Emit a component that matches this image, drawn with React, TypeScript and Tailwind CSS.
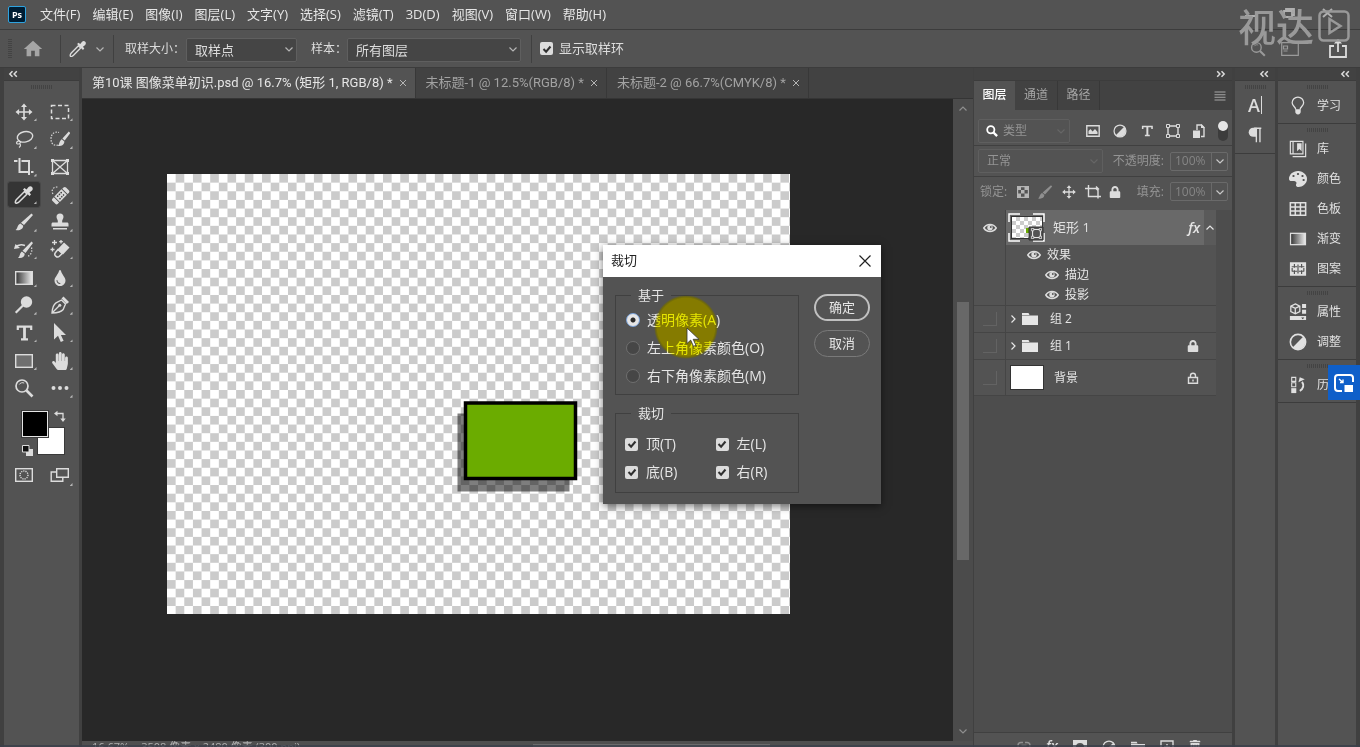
import { useState, type ReactNode } from "react";
import { MdHome } from "react-icons/md";
import { FaHandPaper, FaLock, FaPalette, FaTint, FaTrashAlt } from "react-icons/fa";

const menus = ["文件(F)", "编辑(E)", "图像(I)", "图层(L)", "文字(Y)", "选择(S)", "滤镜(T)", "3D(D)", "视图(V)", "窗口(W)", "帮助(H)"];

const docs = [
  "第10课 图像菜单初识.psd @ 16.7% (矩形 1, RGB/8) *",
  "未标题-1 @ 12.5%(RGB/8) *",
  "未标题-2 @ 66.7%(CMYK/8) *",
];

function Svg({ children, className = "size-5", box = "0 0 20 20" }: { children: ReactNode; className?: string; box?: string }) {
  return (
    <svg viewBox={box} className={`shrink-0 ${className}`} fill="none" stroke="currentColor" strokeWidth="1.4" aria-hidden="true">
      {children}
    </svg>
  );
}

const solid = { fill: "currentColor", stroke: "none" };

function Chevron({ className = "" }: { className?: string }) {
  return (
    <Svg box="0 0 10 10" className={`size-2.5 ${className}`}>
      <path d="M1.5 3.5 5 7l3.5-3.5" strokeWidth="1.2" />
    </Svg>
  );
}

function Double({ right = false }: { right?: boolean }) {
  return (
    <Svg box="0 0 10 8" className={`h-2 w-2.5 text-[#dcdcdc] ${right ? "rotate-180" : ""}`}>
      <path d="M4.5 1.2 1.8 4l2.7 2.8M8.8 1.2 6.1 4l2.7 2.8" strokeWidth="1.5" />
    </Svg>
  );
}

function Grip() {
  return <div className="mx-auto h-1 w-[21px] bg-[repeating-linear-gradient(90deg,#434343_0_1px,transparent_1px_2px)]" />;
}

function Eye() {
  return (
    <Svg box="0 0 14 10" className="h-2.5 w-3.5 text-[#dcdcdc]">
      <path d="M.8 5C3.6.4 10.4.4 13.2 5 10.4 9.6 3.6 9.6.8 5Z" strokeWidth="1.5" />
      <circle cx="7" cy="4.8" r="2.7" {...solid} />
      <circle cx="7.8" cy="4" r=".9" fill="#535353" stroke="none" />
    </Svg>
  );
}

function Folder({ className = "h-3.5 w-4" }: { className?: string }) {
  return (
    <Svg box="0 0 16 14" className={className}>
      <path d="M0 1h6.5l1 2H0zM0 3.6h16V13H0z" {...solid} />
    </Svg>
  );
}

function HalfCircle({ className = "size-4" }: { className?: string }) {
  return (
    <Svg box="0 0 16 16" className={className}>
      <circle cx="8" cy="8" r="6.8" />
      <path d="M12.8 3.2a6.8 6.8 0 0 1-9.6 9.6z" {...solid} />
    </Svg>
  );
}

function Shape({ className = "size-3.5" }: { className?: string }) {
  return (
    <Svg box="0 0 14 14" className={className}>
      <path d="M3 2h8M3 12h8M2 3v8M12 3v8" strokeWidth="1.4" />
      <path d="M.5.5h3v3h-3zM10.5.5h3v3h-3zM.5 10.5h3v3h-3zM10.5 10.5h3v3h-3z" strokeWidth="1" fill="#535353" />
    </Svg>
  );
}

function Serif({ className = "size-5" }: { className?: string }) {
  return (
    <Svg className={className}>
      <path d="M3.8 7V3.6h13.4V7M7 16.4h7" strokeWidth="2.2" />
      <path d="M10.5 3.5v13" strokeWidth="2.8" />
    </Svg>
  );
}

const Magnifier = ({ className = "size-5" }: { className?: string }) => (
  <Svg className={className}>
    <circle cx="8" cy="8" r="6" strokeWidth="1.7" />
    <path d="M5.3 6.5c1-1.8 3.4-2.3 4.9-1.4" strokeWidth="1" />
    <path d="m12.5 12.5 6 6" strokeWidth="2.6" />
  </Svg>
);

const tools: { name: string; icon: ReactNode; plain?: boolean }[] = [
  {
    name: "移动",
    icon: (
      <Svg>
        <path d="M10 4v12M4 10h12" strokeWidth="1.6" />
        <path d="m10 1.5 3 3.6H7zM10 18.5l3-3.6H7zM1.5 10l3.6-3v6zM18.5 10l-3.6-3v6z" {...solid} />
      </Svg>
    ),
  },
  { name: "选框", icon: <Svg><rect x="1.5" y="3.5" width="17" height="13" strokeDasharray="4 2.5" strokeWidth="1.5" /></Svg> },
  {
    name: "套索",
    icon: (
      <Svg>
        <ellipse cx="11" cy="7.8" rx="7.8" ry="5.2" transform="rotate(-12 11 7.8)" />
        <path d="M4.5 12.2c-2.5.4-2.8 3 0 2.8 2.2-.2 2.6-2.6.4-2.9M5.8 15c1.3 1 .6 2.6-.8 3.5" strokeWidth="1.2" />
      </Svg>
    ),
  },
  {
    name: "快速选择",
    icon: (
      <Svg>
        <path d="M8 16c-4 1-7-1-7-6s3.500-8 8-6.500" strokeDasharray="1.500 1.300" strokeWidth="1.200" />
        <path d="M18.800 2.500 20.300 4l-5.600 7.400-2.300-2zM11.800 10.200l2.500 2.200c.3 3.400-3 5.100-6.800 4.600 2.300-1.400 1.400-5 4.300-6.800z" {...solid} />
      </Svg>
    ),
  },
  { name: "裁剪", icon: <Svg><path d="M0 4h3.500M5.500 1v14h9M7.500 4H15v14M17 15h2.500" strokeWidth="2" /></Svg> },
  {
    name: "图框",
    plain: true,
    icon: (
      <Svg>
        <path d="M2.500 3.500h15v13h-15zM2.500 3.500l15 13M17.500 3.500l-15 13" strokeWidth="1.300" />
        <path d="M1 2h3v3H1zM16 2h3v3h-3zM1 15h3v3H1zM16 15h3v3h-3z" {...solid} />
      </Svg>
    ),
  },
  {
    name: "吸管",
    icon: (
      <Svg>
        <path d="m10.500 6.500-8 8c-1 1-1.500 3-1 3.500s2.500 0 3.500-1l8-8z" strokeWidth="1.500" />
        <path d="M9 4.500 10.500 3l2 1.500 2-2.500c2.500-2.300 5.700 1 3.500 3.500l-2.500 2 1.500 2-1.500 1.500z" {...solid} />
      </Svg>
    ),
  },
  {
    name: "修复画笔",
    icon: (
      <Svg>
        <path d="M3 9C.5 5 4 .5 8.500 2.500" strokeDasharray="1.500 1.500" strokeWidth="1.200" />
        <g transform="rotate(-45 10.500 10.500)">
          <path d="M4.500 7H2.800A1.800 1.800 0 0 0 1 8.800v3.900a1.800 1.800 0 0 0 1.800 1.800h1.700zM16.500 7h1.700A1.800 1.800 0 0 1 20 8.800v3.900a1.800 1.800 0 0 1-1.800 1.800h-1.700z" {...solid} />
          <rect x="5.500" y="6.800" width="10" height="7.800" {...solid} />
          <path d="M8 9h0M10.500 9h0M13 9h0M8 12.300h0M10.500 12.300h0M13 12.300h0" stroke="#444" strokeWidth="1.700" strokeLinecap="round" />
        </g>
      </Svg>
    ),
  },
  {
    name: "画笔",
    icon: <Svg><path d="M17.500 1.500 19 3l-9 10-3-2.300zM6.400 11.400l2.800 2.400c0 3.700-4 5.200-7.700 4.200 2.300-1.200 1.400-5 4.900-6.600z" {...solid} /></Svg>,
  },
  {
    name: "图章",
    icon: <Svg><path d="M6.500 5a3.500 3.500 0 0 1 7 0c0 2-1.800 3-1.300 5.500H17c1 0 1.500.6 1.500 1.500v2.500h-17V12c0-.9.500-1.500 1.500-1.500h4.800C8.300 8 6.500 7 6.500 5zM3 16h14v1.500H3z" {...solid} /></Svg>,
  },
  {
    name: "历史画笔",
    icon: (
      <Svg>
        <path d="M1 7.500c3-3 6-3.500 10-2" strokeWidth="1.500" />
        <path d="m0 9 1.500-5L6 8z" {...solid} />
        <path d="M17.500 1.500 19 3l-7.500 10-3-2.300zM7.900 11.400l2.800 2.400c0 3.200-3 4.700-6.700 4 2.300-1.200 1.400-5 3.900-6.400z" {...solid} />
        <path d="M17.500 7.500c1 4-.5 7.500-4 9" strokeDasharray="1.300 1.600" strokeWidth="1.300" />
      </Svg>
    ),
  },
  {
    name: "橡皮擦",
    icon: (
      <Svg>
        <path d="m14 2.500 5.500 5-6.500 7-5.500-5z" {...solid} />
        <path d="m8 9.500-2.500 3c-1 1.200-1 2.500.2 3.600s2.600 1.200 3.700.1l2.800-2.700z" strokeWidth="1.500" />
        <path d="M4.500 0v5M2 2.500h5M11 0v3.500M9.200 1.700h3.600M2.500 7.500v4M.5 9.500h4" strokeWidth="1.300" />
      </Svg>
    ),
  },
  {
    name: "渐变",
    icon: (
      <Svg>
        <defs>
          <linearGradient id="gradTool"><stop stopColor="#333" /><stop offset="1" stopColor="#eee" /></linearGradient>
        </defs>
        <rect x="1.700" y="3.700" width="16.600" height="12.600" fill="url(#gradTool)" />
      </Svg>
    ),
  },
  { name: "模糊", icon: <FaTint className="size-4" /> },
  { name: "减淡", icon: <Svg><circle cx="12.500" cy="7" r="5.700" {...solid} /><path d="m9 10.500-7.300 7.300" strokeWidth="2.200" /></Svg> },
  {
    name: "钢笔",
    icon: (
      <Svg>
        <path d="M2 18c.3-5 1.500-8.500 4-10.200L11.500 5l4 4-2.300 5.500C11.500 16.700 7 17.800 2 18zM2.500 17.500 9 11" />
        <circle cx="9.800" cy="10.300" r="1.500" {...solid} />
        <path d="m11.500 3.500 2-2 5.500 5.400-2.200 2z" {...solid} />
      </Svg>
    ),
  },
  { name: "文字", icon: <Serif /> },
  { name: "路径选择", icon: <Svg><path d="M4 0v16.500l4-3.700L10.800 19l2.800-1.200-2.700-5.800H16z" {...solid} /></Svg> },
  { name: "矩形", icon: <Svg><rect x="1.700" y="3.700" width="16.600" height="12.600" fill="#6f6f6f" /></Svg> },
  { name: "抓手", icon: <FaHandPaper className="size-[18px]" /> },
  { name: "缩放", icon: <Magnifier />, plain: true },
  { name: "更多", icon: <Svg><path d="M3.500 10h0M10 10h0M16.500 10h0" strokeWidth="4" strokeLinecap="round" /></Svg> },
];

function Toolbar() {
  const [active, setActive] = useState("吸管");
  return (
    <aside className="flex w-[75px] shrink-0 flex-col bg-[#535353] text-[#dcdcdc]">
      <div className="flex h-[13px] items-center border-b border-[#3c3c3c] bg-[#424242] pl-1"><Double /></div>
      <div className="pt-1"><Grip /></div>
      <div className="mx-auto mt-[9px] grid h-[304px] w-[72px] grid-cols-2 grid-rows-11">
        {tools.map((t) => (
          <button
            key={t.name}
            aria-label={t.name}
            onClick={() => setActive(t.name)}
            className={`relative m-auto grid h-[25px] w-8 place-items-center rounded-xs ${t.name === active ? "bg-[#353535] outline outline-[#484848]" : ""}`}
          >
            {t.icon}
            {!t.plain && <span className="absolute right-[3px] bottom-[3px] size-[3px] bg-[#b5b5b5] [clip-path:polygon(100%_0,100%_100%,0_100%)]" />}
          </button>
        ))}
      </div>
      <div className="mt-2 flex pl-[17px]">
        <div className="relative h-[45px] w-[43px]">
          <button aria-label="背景色" className="absolute top-[17px] left-4 size-7 border border-[#3a3a3a] bg-white" />
          <button aria-label="前景色" className="absolute top-0 left-0 size-7 border border-[#3a3a3a] bg-black outline -outline-offset-2 outline-[#e6e6e6]" />
          <Svg box="0 0 12 12" className="absolute top-0 left-[33px] size-3">
            <path d="M2 3.500h7v6" strokeWidth="1.300" />
            <path d="M0 3.500 3.500.8v5.400zM9 12 6.300 8.500h5.400z" {...solid} />
          </Svg>
          <Svg box="0 0 12 12" className="absolute -bottom-px left-0 size-3">
            <path d="M5 5h7v7H5z" {...solid} />
            <path d="M1.500 1.500H8V8H1.500z" fill="#111" strokeWidth="1" />
          </Svg>
        </div>
      </div>
      <div className="mx-auto mt-2.5 grid w-[72px] grid-cols-2 place-items-center">
        <button aria-label="快速蒙版">
          <Svg><rect x="1.700" y="3.700" width="16.600" height="12.600" /><circle cx="10" cy="10" r="4" strokeDasharray="1.200 1" /></Svg>
        </button>
        <button aria-label="屏幕模式" className="relative">
          <Svg><path d="M6.700 3.700h11.600v8.600H6.700zM6 7H1.200v9.300h11.600V13" /></Svg>
          <span className="absolute -right-[3px] -bottom-px size-[3px] bg-[#b5b5b5] [clip-path:polygon(100%_0,100%_100%,0_100%)]" />
        </button>
      </div>
    </aside>
  );
}

function Select({ id, value, className, selectClass = "" }: { id: string; value: string; className: string; selectClass?: string }) {
  return (
    <div className={`relative ${className}`}>
      <select id={id} className={`size-full appearance-none rounded-xs border border-[#5f5f5f] pl-2 ${selectClass}`}>
        <option>{value}</option>
      </select>
      <Chevron className="pointer-events-none absolute top-1/2 right-[3px] -translate-y-1/2 text-[#b5b5b5]" />
    </div>
  );
}

function Check({ label, className = "" }: { label: string; className?: string }) {
  return (
    <label className={`flex items-center ${className}`}>
      <span className="relative grid size-[13px] place-items-center">
        <input type="checkbox" defaultChecked className="peer size-[13px] appearance-none rounded-xs bg-[#6b6b6b] checked:bg-[#dcdcdc]" />
        <Svg box="0 0 12 12" className="pointer-events-none absolute size-3 text-[#303030] opacity-0 peer-checked:opacity-100">
          <path d="m2.500 6 2.600 2.700L9.500 3.500" strokeWidth="2" />
        </Svg>
      </span>
      {label}
    </label>
  );
}

function OptionsBar() {
  return (
    <div className="flex h-[38px] items-center border-b border-[#3c3c3c] text-[#dcdcdc]">
      <div className="ml-2 h-5 w-1 bg-[repeating-linear-gradient(#434343_0_1px,transparent_1px_2px)]" />
      <button aria-label="主页" className="ml-2.5"><MdHome className="size-[22px] text-[#a5a5a5]" /></button>
      <div className="ml-4 h-7 w-px bg-[#404040]" />
      <button aria-label="吸管工具" className="ml-2 flex items-center gap-2">
        <span className="size-[18px] *:size-[18px]">{tools[6].icon}</span>
        <Chevron className="text-[#b5b5b5]" />
      </button>
      <div className="ml-2 h-7 w-px bg-[#404040]" />
      <label htmlFor="size" className="ml-[11px] text-xs">取样大小：</label>
      <Select id="size" value="取样点" className="ml-px h-6 w-[111px]" selectClass="bg-[#454545] text-[13px]" />
      <label htmlFor="sample" className="ml-3.5 text-xs">样本：</label>
      <Select id="sample" value="所有图层" className="h-6 w-[174px]" selectClass="bg-[#454545] text-[13px]" />
      <div className="ml-2.5 h-7 w-px bg-[#404040]" />
      <Check label="显示取样环" className="ml-2 gap-1.5 text-[13px]" />
      <div className="mr-3 ml-auto flex items-center">
        <button aria-label="搜索" className="text-[#9a9a9a]"><Magnifier className="size-4" /></button>
        <button aria-label="工作区" className="ml-3.5 text-[#9a9a9a]">
          <Svg><path d="M1.700 3.700h16.600v12.600H1.700zM3.500 7h4v3h-4zM3.500 12h4" strokeWidth="1.200" /></Svg>
        </button>
        <button aria-label="共享" className="ml-7">
          <Svg><path d="M6 7H2v11h16V7h-4M10 13V3" strokeWidth="1.800" /><path d="m10 0 4 4.500H6z" {...solid} /></Svg>
        </button>
      </div>
    </div>
  );
}

function Artwork() {
  return (
    <svg viewBox="0 0 623 440" className="w-[623px] shrink-0" aria-label="画布">
      <defs>
        <pattern id="checker" width="17.280" height="17.280" patternUnits="userSpaceOnUse">
          <rect width="17.280" height="17.280" fill="#fff" />
          <path d="M8.640 0h8.640v8.640H8.640zM0 8.640h8.640v8.640H0z" fill="#cbcbcb" />
        </pattern>
        <filter id="soft"><feGaussianBlur stdDeviation=".7" /></filter>
      </defs>
      <rect width="623" height="440" fill="url(#checker)" />
      <rect x="290.500" y="239.500" width="112" height="78" fill="#000" opacity=".5" filter="url(#soft)" />
      <rect x="298.500" y="229" width="110" height="75.500" fill="#6bac00" stroke="#000" strokeWidth="3.500" />
    </svg>
  );
}

function Document() {
  const [active, setActive] = useState(0);
  return (
    <main className="ml-[3px] flex min-w-0 flex-1 flex-col">
      <div className="flex h-[31px] shrink-0 border-b border-[#353535] bg-[#424242]">
        {docs.map((d, i) => (
          <div key={d} className={`flex items-center gap-1.5 border-r border-[#383838] pr-2 pl-2.5 whitespace-nowrap ${i === active ? "bg-[#535353] text-[#e6e6e6]" : "text-[#a2a2a2]"}`}>
            <button onClick={() => setActive(i)} className="font-['Roboto','Noto_Sans_CJK_SC',sans-serif] text-[13px]">{d}</button>
            <button aria-label="关闭">
              <Svg box="0 0 8 8" className="size-2 text-[#b5b5b5]"><path d="m1 1 6 6M7 1 1 7" strokeWidth="1" /></Svg>
            </button>
          </div>
        ))}
      </div>
      <div className="flex min-h-0 flex-1">
        <div className="flex min-w-0 flex-1 items-start overflow-hidden bg-[#282828] pt-[75px] pl-[85px]">
          <Artwork />
        </div>
        <div className="flex w-5 flex-col items-center justify-between bg-[#4b4b4b] py-[5px] text-[#8f8f8f]">
          <Chevron className="rotate-180" />
          <div className="mt-auto mb-[166px] h-[258px] w-3 bg-[#686868]" />
          <Chevron />
        </div>
      </div>
      <div className="relative flex h-1.5 shrink-0 overflow-hidden bg-[#4f4f4f] pl-[10px] text-[11px] leading-3 whitespace-pre text-[#b0b0b0]">
        <span>16.67%</span>
        <span className="ml-3">3508 像素 x 2480 像素 (300 ppi)</span>
        <div className="absolute top-[3px] left-[451px] h-1 w-[237px] bg-[#6a6a6a]" />
      </div>
    </main>
  );
}

function Percent({ id, label }: { id: string; label: string }) {
  return (
    <div className="ml-auto flex items-center whitespace-nowrap text-[#949494]">
      <label htmlFor={id}>{label}</label>
      <span className="ml-1.5 flex h-[19px] rounded-xs border border-[#6a6a6a]">
        <input id={id} defaultValue="100%" className="w-10 bg-transparent pl-1 text-xs text-[#858585]" />
        <button aria-label="展开" className="grid w-4 place-items-center border-l border-[#6a6a6a] text-[#c8c8c8]"><Chevron /></button>
      </span>
    </div>
  );
}

function Lock({ open = false }: { open?: boolean }) {
  if (!open) return <FaLock className="size-3 shrink-0" />;
  return (
    <Svg box="0 0 12 12" className="size-3"><path d="M1.500 5.500h9v5.800h-9zM3.500 5.500V3.700a2.500 2.500 0 0 1 5 0v1.800M6 7.500v2" /></Svg>
  );
}

function LayerRow({ name, icon, lock, className }: { name: string; icon: ReactNode; lock?: ReactNode; className: string }) {
  return (
    <li className={`flex border-b border-[#454545] ${className}`}>
      <button aria-label="显示图层" className="grid w-8 place-items-center border-r border-[#454545]">
        <span className="size-3.5 border-r border-b border-[#636363]" />
      </button>
      <div className="flex flex-1 items-center pr-[17px]">
        {icon}
        <span>{name}</span>
        <span className="ml-auto text-[#dcdcdc]">{lock}</span>
      </div>
    </li>
  );
}

function Thumb() {
  return (
    <div className="relative ml-0.5 grid h-[29px] w-[37px] place-items-center">
      <div className="h-[23px] w-8 border border-[#333] bg-[conic-gradient(#ccc_25%,#fff_0_50%,#ccc_0_75%,#fff_0)] bg-size-[8px_8px]" />
      <Svg box="0 0 37 29" className="absolute inset-0 h-[29px] w-[37px] text-white">
        <path d="M1 9V1h11M25 1h11v8M36 20v8H25M12 28H1v-8" strokeWidth="1.500" />
        <path d="M18 15h3v5h-3z" fill="#6bac00" stroke="none" />
        <path d="M21 14h14v13H21z" fill="#535353" stroke="#333" strokeWidth="1" />
      </Svg>
      <Shape className="absolute right-[3px] bottom-[3px] size-[11px]" />
    </div>
  );
}

function Layers() {
  return (
    <section className="flex w-[258px] shrink-0 flex-col bg-[#535353] text-xs text-[#dcdcdc]">
      <div className="flex h-[13px] shrink-0 items-center justify-end border-b border-[#3c3c3c] bg-[#424242] pr-1.5"><Double right /></div>
      <div className="flex h-[29px] shrink-0 items-stretch bg-[#424242] text-[#a5a5a5]">
        <button className="w-[41px] bg-[#535353] pb-0.5 font-medium text-white">图层</button>
        <button className="w-[43px] border-r border-[#383838] pb-0.5">通道</button>
        <button className="w-[42px] border-r border-[#383838] pb-0.5">路径</button>
        <button aria-label="面板菜单" className="mr-1.5 ml-auto">
          <Svg box="0 0 12 10" className="h-2.5 w-3"><path d="M.5 1h11M.5 3.700h11M.5 6.300h11M.5 9h11" strokeWidth="1.100" /></Svg>
        </button>
      </div>
      <div className="flex h-9 shrink-0 items-center border-b border-[#404040] pt-1.5 pl-1">
        <div className="relative h-6 w-[92px] text-[#949494]">
          <select aria-label="类型" className="size-full appearance-none rounded-xs border border-[#5f5f5f] pl-6 text-xs"><option>类型</option></select>
          <Svg className="pointer-events-none absolute top-1.5 left-2 size-3 text-white"><circle cx="8" cy="8" r="6" strokeWidth="3" /><path d="m12.500 12.500 6 6" strokeWidth="4" /></Svg>
          <Chevron className="pointer-events-none absolute top-[7px] right-1 text-[#666]" />
        </div>
        <div className="flex flex-1 items-center justify-between pr-1 pl-4">
          <Svg box="0 0 14 12" className="h-3 w-3.5"><path d="M.8.8h12.400v10.400H.8z" /><path d="M2.500 9V6l2-2 2 2.500L9 4l2.500 3v2z" {...solid} /></Svg>
          <HalfCircle className="size-3.5" />
          <Serif className="size-3.5" />
          <Shape className="size-3.5" />
          <Svg box="0 0 12 14" className="h-3.5 w-3"><path d="M4 6V1h4.500L11 3.500v9H8" /><path d="M8 0v4h4zM0 6.500h7V14H0z" {...solid} /></Svg>
          <span className="flex h-5 w-2.5 justify-center rounded-full bg-[#3c3c3c]"><span className="size-2.5 rounded-full bg-[#e6e6e6]" /></span>
        </div>
      </div>
      <div className="flex h-[31px] shrink-0 items-center border-b border-[#404040] pr-1 pl-1">
        <div className="relative h-6 w-[125px] text-[#949494]">
          <select aria-label="混合模式" className="size-full appearance-none rounded-xs border border-[#5f5f5f] pl-2 text-xs"><option>正常</option></select>
          <Chevron className="pointer-events-none absolute top-[7px] right-1 text-[#666]" />
        </div>
        <Percent id="opacity" label="不透明度:" />
      </div>
      <div className="flex h-[33px] shrink-0 items-center gap-2 pr-1 pb-1 pl-1.5">
        <span className="mr-0.5 whitespace-nowrap text-[#949494]">锁定:</span>
        <Svg box="0 0 12 12" className="size-3 text-[#b5b5b5]"><path d="M.6.6h10.800v10.800H.6z" strokeWidth="1.200" /><path d="M1 1h3v3H1zM7.500 1h3.500v3H7.500zM4 4h3.500v3.500H4zM1 7.500h3V11H1zM7.500 7.500H11V11H7.500z" {...solid} /></Svg>
        <span className="size-4 shrink-0 text-[#8f8f8f] *:size-4">{tools[8].icon}</span>
        <span className="size-4 shrink-0 *:size-4">{tools[0].icon}</span>
        <Svg box="0 0 16 14" className="h-3.5 w-4"><path d="M0 3.500h11l2 2v8M3.500 0v11.500H16M11 1.500l3 3" /></Svg>
        <Lock />
        <Percent id="fill" label="填充:" />
      </div>
      <div className="flex min-h-0 flex-1 bg-[#4d4d4d]">
        <ul className="mr-4 flex-1 self-start bg-[#535353] text-[#e6e6e6]">
          <li className="flex h-24 border-b border-[#454545]">
            <div className="flex w-8 justify-center border-r border-[#454545] pt-[13px]"><Eye /></div>
            <div className="flex-1">
              <div className="flex h-[35px] items-center bg-[#696969] text-[13px]">
                <Thumb />
                <span className="ml-2 text-[#e0e0e0]">矩形 1</span>
                <span className="ml-auto pr-1 text-sm font-semibold italic">fx</span>
                <button aria-label="折叠效果" className="grid h-full w-3 place-items-center bg-[#5a5a5a]"><Chevron className="rotate-180" /></button>
              </div>
              <div className="flex h-5 items-center gap-1.5 pl-[21px]"><Eye />效果</div>
              <div className="flex h-5 items-center gap-1.5 pl-[39px]"><Eye />描边</div>
              <div className="flex h-5 items-center gap-1.5 pl-[39px]"><Eye />投影</div>
            </div>
          </li>
          {["组 2", "组 1"].map((g) => (
            <LayerRow
              key={g}
              name={g}
              className="h-[27px]"
              icon={<><Chevron className="ml-0.5 -rotate-90" /><Folder className="mr-3 ml-1 h-3.5 w-4" /></>}
              lock={g === "组 1" && <Lock />}
            />
          ))}
          <LayerRow name="背景" className="h-9" icon={<span className="mr-2.5 ml-1 h-[25px] w-[34px] border border-[#333] bg-white" />} lock={<Lock open />} />
        </ul>
      </div>
      <div className="flex h-[15px] shrink-0 items-start gap-[15px] overflow-hidden border-t border-[#404040] pt-[7px] pl-[43px]">
        <Svg box="0 0 14 14" className="size-3.5 text-[#8f8f8f]"><path d="M6 8.500H4a3 3 0 0 1 0-6h2M8 2.500h2a3 3 0 0 1 0 6H8M4.500 5.500h5" /></Svg>
        <span className="text-sm leading-3 font-semibold italic">fx</span>
        <Svg box="0 0 14 14" className="size-3.5"><path d="M0 0v14h14V0zm7 3a4 4 0 1 1 0 8 4 4 0 0 1 0-8z" fillRule="evenodd" {...solid} /></Svg>
        <HalfCircle className="size-3.5" />
        <Folder className="h-3.5 w-3.5" />
        <Svg box="0 0 14 14" className="size-3.5"><path d="M1 1h12v12H1zM7 4v6M4 7h6" /></Svg>
        <FaTrashAlt className="size-3" />
      </div>
    </section>
  );
}

const swatchGrid = <Svg><path d="M1.500 3h17v14h-17zM1.500 7.700h17M1.500 12.300h17M7 3v14M12.700 3v14" strokeWidth="1.700" /></Svg>;

const groups: { name: string; icon: ReactNode }[][] = [
  [{ name: "学习", icon: <Svg><path d="M7.500 14c0-3-4-4-4-7.500a6.300 6.300 0 0 1 12.800 0c0 3.500-4 4.500-4 7.500" /><path d="M7 13.500h6v3c0 1.300-1 3-3 3s-3-1.700-3-3z" {...solid} /></Svg> }],
  [
    { name: "库", icon: <Svg><path d="M1.500 1.500h14v14h-14zM4.500 1.500v14M4 18.500h14.500V4" strokeWidth="1.300" /><path d="M9 3.500h5v9L11.500 10 9 12.500z" {...solid} /></Svg> },
    { name: "颜色", icon: <FaPalette className="h-4 w-5 -scale-x-100" preserveAspectRatio="none" /> },
    { name: "色板", icon: swatchGrid },
    { name: "渐变", icon: tools[12].icon },
    {
      name: "图案",
      icon: (
        <Svg>
          <path d="M1 2.500h18v15H1z" {...solid} />
          <path d="M3 7.500h6M11 7.500h6M3 12.500h6M11 12.500h6M6 4.500v4M6 11.500v4M14 4.500v4M14 11.500v4M10 5v10M3.500 9v3M16.500 9v3" stroke="#535353" strokeWidth="1.300" />
        </Svg>
      ),
    },
  ],
  [
    {
      name: "属性",
      icon: (
        <Svg>
          <path d="m7 1 5 2.500v6L7 12 2 9.500v-6zM2 3.500 7 6l5-2.500M7 6v6" />
          <path d="M14.500 1h4.500v4.500h-4.500zM14.500 7.500h4.500V12h-4.500zM1 14.500h18V19H1z" {...solid} />
          <path d="M13.500 16h3.500l-1.700 2z" fill="#444" stroke="none" />
        </Svg>
      ),
    },
    { name: "调整", icon: <HalfCircle className="size-[18px]" /> },
  ],
  [
    {
      name: "历史",
      icon: (
        <Svg>
          <path d="M3 1.500h4.500V6H3zM3 7.500h4.500V12H3z" strokeWidth="1.200" />
          <path d="M2.500 13.500h5.600V19H2.500z" {...solid} />
          <path d="M12 16.500c4-2 5-6.500 2.500-10" strokeWidth="2.200" />
          <path d="m10.500 7 1.500-5.500 5.500 2z" {...solid} />
        </Svg>
      ),
    },
  ],
];

function Docks() {
  return (
    <>
      <section className="ml-[3px] w-10 shrink-0 bg-[#535353] text-[#dcdcdc]">
        <div className="flex h-[13px] items-center justify-end border-b border-[#3c3c3c] bg-[#424242] pr-1.5"><Double /></div>
        <div className="border-b border-[#3c3c3c] pt-1 pb-0.5">
          <Grip />
          <button aria-label="字符" className="mt-0.5 flex h-[30px] w-full items-center justify-center pb-0.5 text-lg leading-5 font-semibold">A<span className="ml-px h-[18px] w-px bg-[#dcdcdc]" /></button>
          <button aria-label="段落" className="flex h-[30px] w-full items-center justify-center pb-0.5">
            <Svg className="size-[18px]"><path d="M12 2H8a5 5 0 0 0 0 10h4z" {...solid} /><path d="M11.500 2v16M15.500 2v16M9 2.500h8" strokeWidth="1.500" /></Svg>
          </button>
        </div>
      </section>
      <section className="mr-1 ml-[3px] w-[78px] shrink-0 bg-[#535353] text-xs text-[#e0e0e0]">
        <div className="flex h-[13px] items-center justify-end border-b border-[#3c3c3c] bg-[#424242] pr-1.5"><Double /></div>
        {groups.map((g) => (
          <div key={g[0].name} className="border-b border-[#3c3c3c] pt-1 pb-0.5">
            <Grip />
            <div className="mt-0.5">
              {g.map((p) => (
                <button key={p.name} className="flex h-[30px] w-full items-center pl-[10px]">
                  <span className="mr-[9px] grid size-5 place-items-center *:max-w-[18px]">{p.icon}</span>
                  {p.name}
                </button>
              ))}
            </div>
          </div>
        ))}
      </section>
    </>
  );
}

function TrimDialog() {
  return (
    <div role="dialog" aria-label="裁切" className="absolute top-[245px] left-[603px] w-[278px] bg-[#535353] pb-[11px] text-[13px] text-[#e6e6e6] shadow-[0_2px_8px_#0008]">
      <div className="flex h-8 items-center justify-between bg-white pr-2.5 pl-2 text-[#222]">
        裁切
        <button aria-label="关闭"><Svg box="0 0 12 12" className="size-3"><path d="m.5.500 11 11M11.500.500l-11 11" strokeWidth="1.200" /></Svg></button>
      </div>
      {/* click highlight sits under the labels, the tint on top of them */}
      <div className="absolute top-[50px] left-[51px] size-16 rounded-full bg-[radial-gradient(circle_closest-side,#857b00_90%,transparent)]" />
      <div className="relative flex items-start justify-between pt-2 pr-[11px] pl-3">
        <div className="w-[184px]">
          <fieldset className="h-[110px] border border-[#404040] pt-px pl-[10px] text-sm">
            <legend className="ml-[5px] px-[7px] text-[13px] leading-5">基于</legend>
            {["透明像素(A)", "左上角像素颜色(O)", "右下角像素颜色(M)"].map((t, i) => (
              <label key={t} className="flex h-7 items-center gap-[7px] whitespace-nowrap">
                <input
                  type="radio"
                  name="based"
                  defaultChecked={i === 0}
                  className="size-3.5 appearance-none rounded-full border border-[#6f6f6f] bg-[#464646] checked:border-[#7fa8e0] checked:bg-[radial-gradient(circle,#2b2b2b_0_2px,#e6e6e6_3px)]"
                />
                {t}
              </label>
            ))}
          </fieldset>
          <fieldset className="mt-2 h-[90px] border border-[#404040] pl-[9px]">
            <legend className="ml-1.5 px-[7px] leading-5">裁切</legend>
            <div className="grid grid-cols-2 gap-x-2 pt-[7px]">
              {["顶(T)", "左(L)", "底(B)", "右(R)"].map((t) => (
                <Check key={t} label={t} className="h-7 gap-2 text-sm" />
              ))}
            </div>
          </fieldset>
        </div>
        <div className="mt-[9px] flex w-14 flex-col gap-[9px]">
          <button className="h-[27px] rounded-full border-2 border-[#c0c0c0]">确定</button>
          <button className="h-[27px] rounded-full border border-[#7a7a7a]">取消</button>
        </div>
      </div>
      <div className="pointer-events-none absolute top-[50px] left-[51px] size-16 rounded-full bg-[radial-gradient(circle_closest-side,#ffff00_90%,#ffffff)] mix-blend-multiply" />
      <svg viewBox="0 0 14 21" className="pointer-events-none absolute top-[82px] left-[83px] h-[21px] w-3.5" aria-hidden="true">
        <path d="M1 1v15.500l3.700-3.400 2.800 6.200 2.400-1-2.700-6H13z" fill="#fff" stroke="#333" strokeWidth=".8" />
      </svg>
    </div>
  );
}

export default function App() {
  return (
    <div className="relative flex h-screen flex-col overflow-hidden bg-[#535353] font-['Open_Sans','Noto_Sans_CJK_SC',sans-serif]">
      <header className="flex h-[30px] shrink-0 items-center border-b border-[#3c3c3c] pl-2 text-[#e6e6e6]">
        <span className="grid h-[17px] w-[18px] place-items-center rounded-xs border border-[#2fa3e0] bg-[#001d33] text-[9px] font-bold text-white">Ps</span>
        <nav className="ml-3.5 flex gap-3 text-[13px]">
          {menus.map((m) => <button key={m}>{m}</button>)}
        </nav>
        <div className="mr-[26px] mb-1 ml-auto flex items-center gap-[27px] text-[#b0b0b0]">
          <button aria-label="最小化"><Svg box="0 0 12 12" className="size-3"><path d="M1 9h10" strokeWidth="2" /></Svg></button>
          <button aria-label="最大化"><Svg box="0 0 12 12" className="size-3"><path d="M3 4V2h8v6H9M1 4h8v6H1z" strokeWidth="1.800" /></Svg></button>
          <button aria-label="关闭"><Svg box="0 0 12 12" className="size-3"><path d="m1 2 9 8M10 2l-9 8" strokeWidth="2" /></Svg></button>
        </div>
      </header>
      <OptionsBar />
      <div className="flex min-h-0 flex-1 bg-[#404040] pl-1">
        <Toolbar />
        <Document />
        <div className="w-px shrink-0" />
        <Layers />
        <Docks />
      </div>
      <div className="pointer-events-none absolute inset-x-0 bottom-0 h-0.5 bg-[#3a3f4a]/80" />

      <div className="pointer-events-none absolute top-1.5 right-2.5 flex items-center gap-1 text-[#999]">
        <span className="text-[38px] leading-10 font-medium">视达</span>
        <Svg box="0 0 32 32" className="size-8"><rect x="1.500" y="1.500" width="29" height="29" rx="4" strokeWidth="2.500" /><path d="M11.500 9v14l11-7z" strokeWidth="2.500" /></Svg>
      </div>
      <button aria-label="画中画" className="absolute top-[365px] right-0 grid h-[35px] w-8 place-items-center bg-[#0f5fc9] text-white">
        <Svg className="size-5"><path d="M8 18H4a3 3 0 0 1-3-3V5a3 3 0 0 1 3-3h12a3 3 0 0 1 3 3v4" strokeWidth="2" /><path d="M10.500 12H19v7h-8.500z" {...solid} /><path d="m5 6 4 3.500M9 6.500v3H6" /></Svg>
      </button>
      <TrimDialog />
    </div>
  );
}
